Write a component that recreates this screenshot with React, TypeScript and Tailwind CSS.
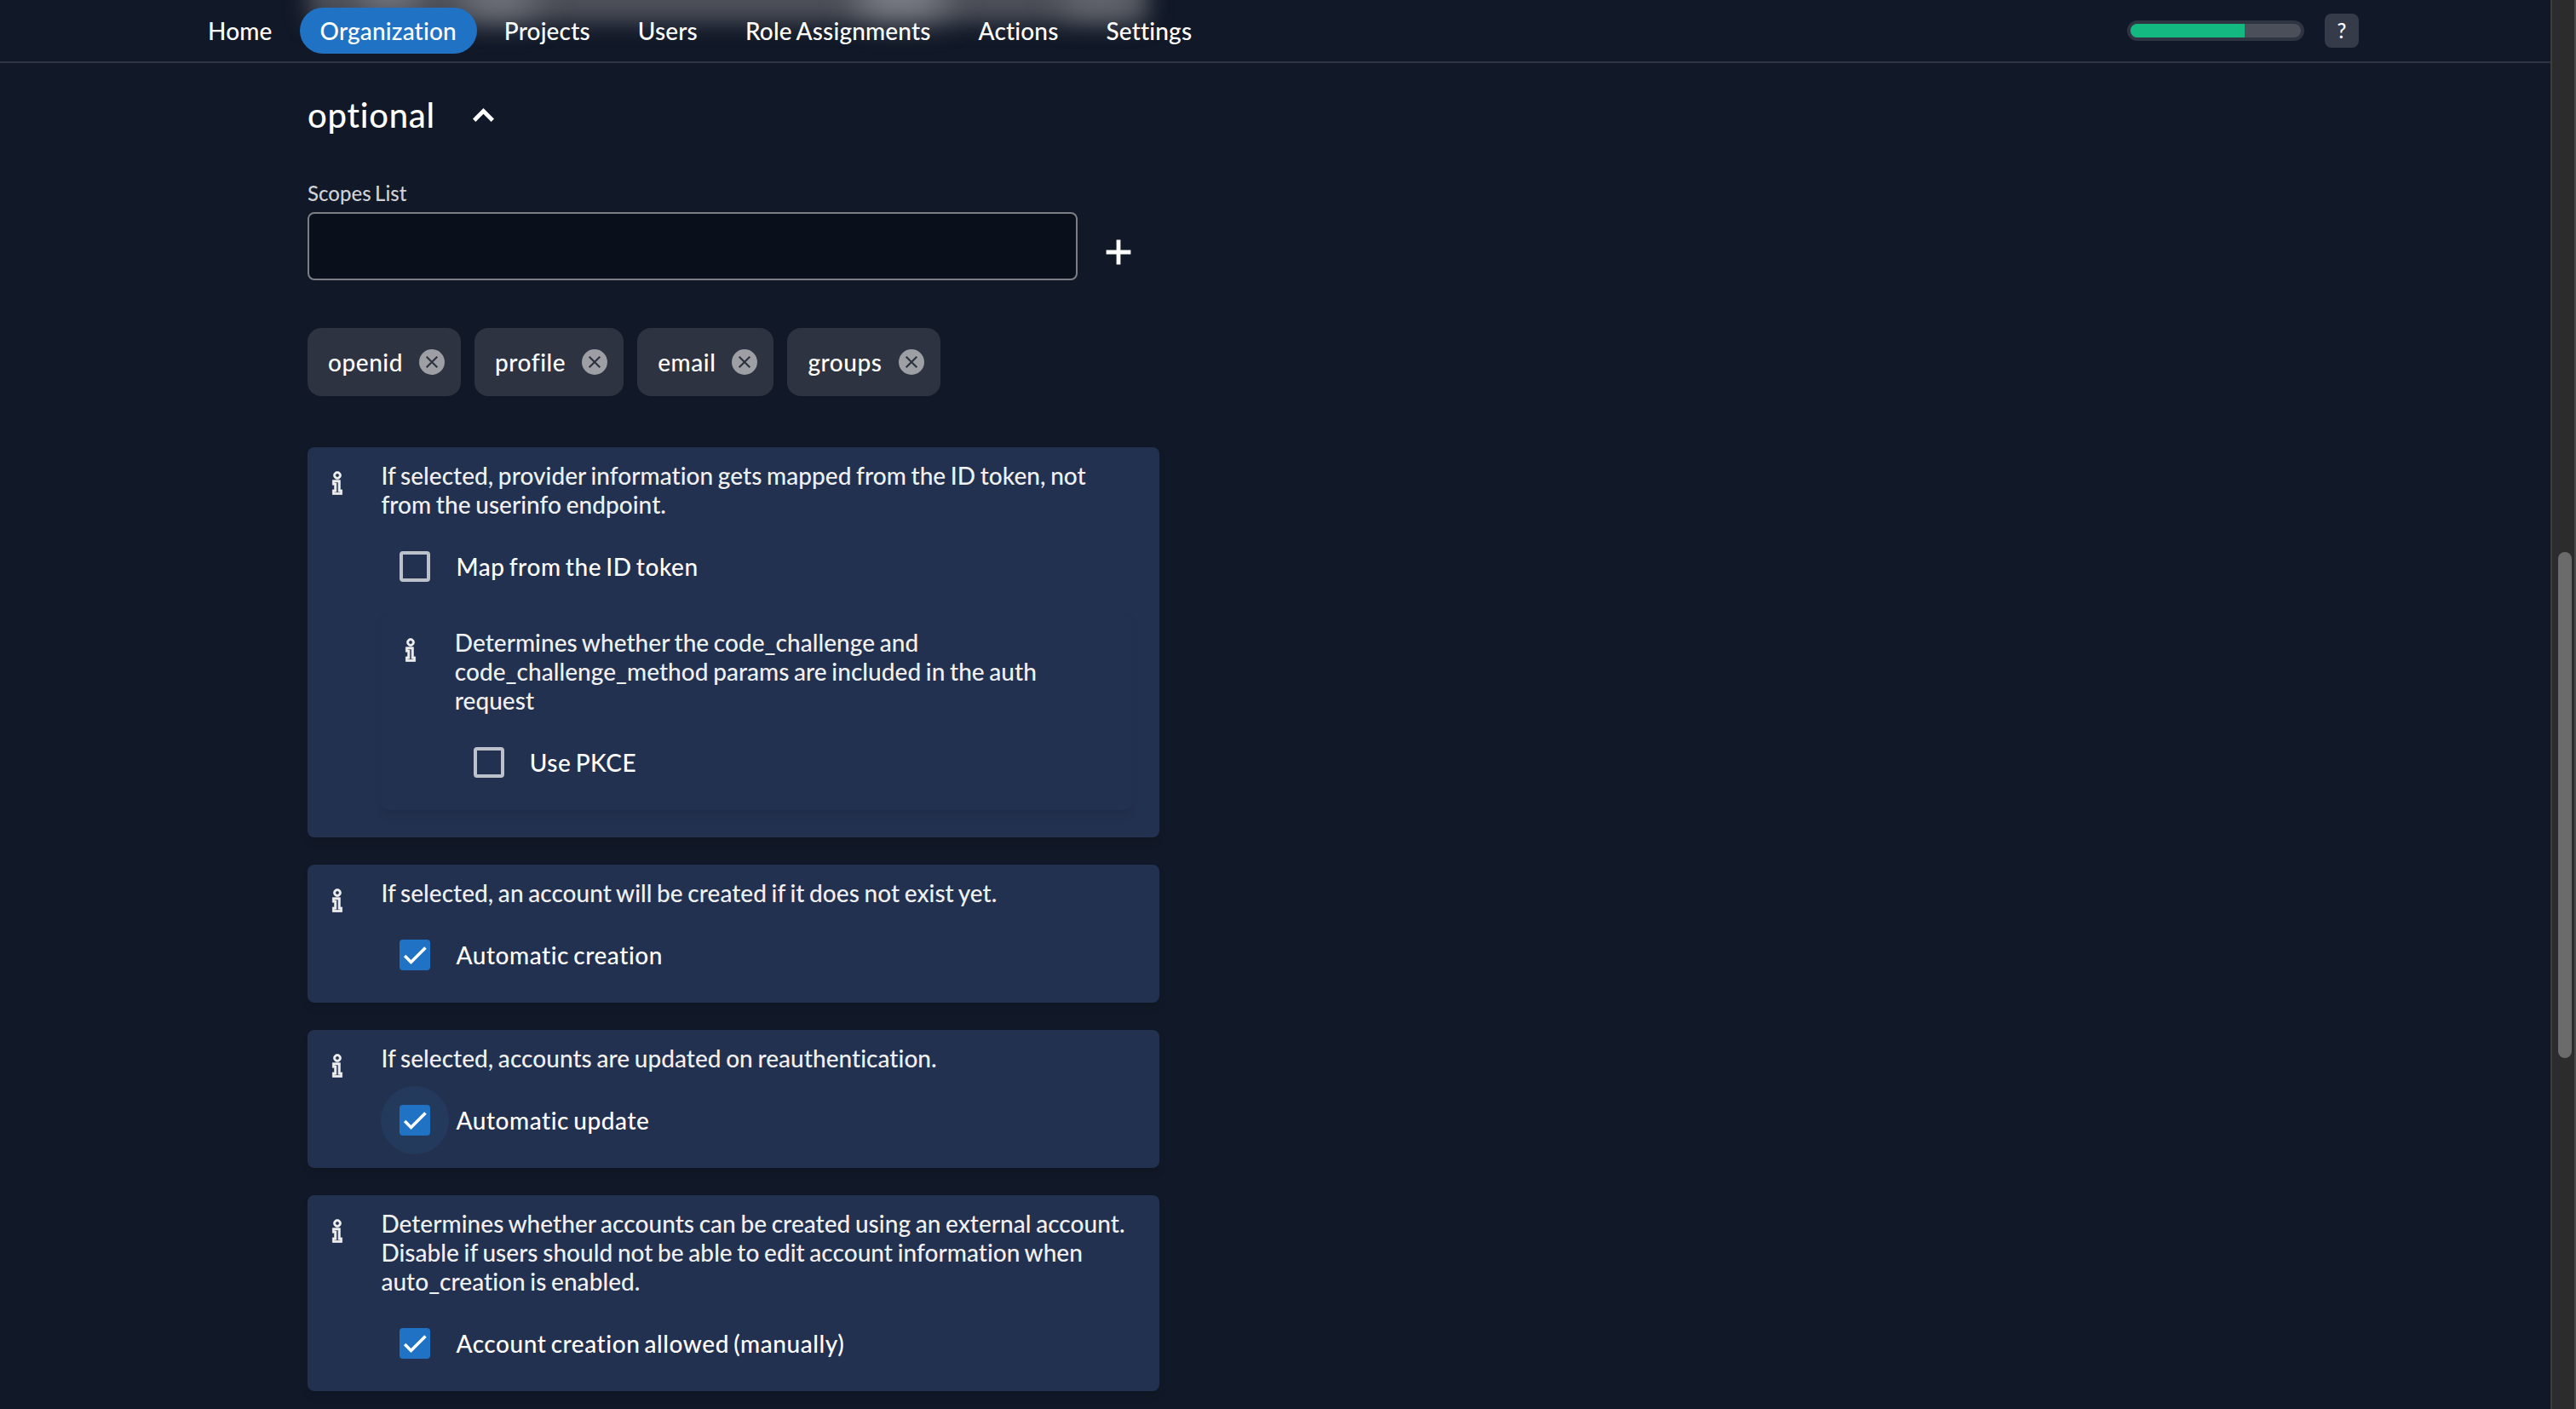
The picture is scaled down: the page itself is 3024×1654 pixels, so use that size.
import { useState } from 'react';
import { LiaInfoSolid } from 'react-icons/lia';

const NAV_ITEMS = ['Home', 'Organization', 'Projects', 'Users', 'Role Assignments', 'Actions', 'Settings'];

function Checkbox({ label, initial = false, focused = false }: { label: string; initial?: boolean; focused?: boolean }) {
  const [checked, setChecked] = useState(initial);
  return (
    <button onClick={() => setChecked(c => !c)} className="mt-4 flex h-20 items-center text-left">
      <span className={`flex h-20 w-20 items-center justify-center rounded-full ${focused ? 'bg-[#233a5c]' : ''}`}>
        {checked ? (
          <span className="flex h-9 w-9 items-center justify-center rounded-[4px] bg-[#2073c4]">
            <svg viewBox="0 0 24 24" className="h-9 w-9">
              <path d="M4.1 12.7 9 17.6 20.3 6.3" fill="none" stroke="#fff" strokeWidth="2.4" />
            </svg>
          </span>
        ) : (
          <span className="h-9 w-9 rounded-[4px] border-4 border-[#bdc1cb]" />
        )}
      </span>
      <span className="pl-2 text-[28px] font-medium tracking-[0.55px] text-white [word-spacing:-2.4px]">{label}</span>
    </button>
  );
}

function InfoSection({ text, children }: { text: string; children: React.ReactNode }) {
  return (
    <div className="flex rounded-lg bg-[#233150] py-4 pr-8 shadow-[0_6px_12px_-2px_rgba(0,0,0,0.12)]">
      <div className="flex w-[86.4px] shrink-0 pt-2 pl-[17px] text-[#f0f0f0]">
        <LiaInfoSolid className="h-9 w-9" stroke="currentColor" strokeWidth={0.6} />
      </div>
      <div className="flex-1">
        <p className="text-[28px] leading-[34px] font-medium tracking-[0.04px] text-[#f0f0f0]">{text}</p>
        {children}
      </div>
    </div>
  );
}

export default function App() {
  const [scopes, setScopes] = useState(['openid', 'profile', 'email', 'groups']);
  const [scope, setScope] = useState('');

  const addScope = () => {
    if (!scope) return;
    setScopes(s => [...s, scope]);
    setScope('');
  };

  return (
    <div className="flex h-[1654px] w-[3024px] overflow-hidden bg-[#111827] font-['Lato',sans-serif] text-white [font-variant-ligatures:none] [word-spacing:-1.5px]">
      <div className="flex w-[2994px] flex-col">
        <header className="relative flex h-[74px] shrink-0 items-center justify-between overflow-hidden border-b-2 border-[#2e3441] pr-[225px] pl-[220px]">
          {/* page content showing through the translucent bar */}
          <div className="absolute -top-10 left-[362px] h-[66px] w-[985px] bg-[#4d5059] blur-[13px]" />
          <div className="absolute -top-5 left-[425px] h-7 w-16 bg-[#85888f] blur-[18px]" />
          <div className="absolute -top-5 left-[545px] h-9 w-20 bg-[#7b7e85] blur-[20px]" />
          <div className="absolute -top-5 left-[1010px] h-9 w-24 bg-[#8c8f95] blur-[20px]" />
          <div className="absolute -top-5 left-[1250px] h-9 w-20 bg-[#686b72] blur-[18px]" />
          <nav className="relative flex gap-2">
            {NAV_ITEMS.map(item => (
              <a
                key={item}
                className={`flex h-[54px] items-center rounded-full px-6 text-[28px] font-medium tracking-[0.16px] ${item === 'Organization' ? 'bg-[#2073c4]' : ''}`}
              >
                {item}
              </a>
            ))}
          </nav>
          <div className="relative flex items-center gap-6">
            <div className="h-6 w-52 rounded-full border-4 border-[#2e3442] bg-[#4b4f5a]">
              <div className="h-4 w-[134px] rounded-l-full bg-[#14b981]" />
            </div>
            <button className="h-10 w-10 rounded-lg bg-[#353b49] text-2xl font-medium">?</button>
          </div>
        </header>

        <main className="ml-[361px] w-[1000px] pt-[37px]">
          <div className="flex items-center">
            <h2 className="w-[194px] text-[40px] leading-[48px] font-medium tracking-[0.75px]">optional</h2>
            <svg viewBox="0 0 25 16" className="h-4 w-[25px]">
              <path d="M1.7 14.3 12.5 3.4 23.3 14.3" fill="none" stroke="currentColor" strokeWidth="4.8" />
            </svg>
          </div>

          <div className="mt-[52px] text-2xl leading-8 font-medium text-[#d0d1d4]">Scopes List</div>
          <div className="mt-[6px] flex items-center">
            <input
              value={scope}
              onChange={e => setScope(e.target.value)}
              className="h-20 w-[904px] rounded-lg border-2 border-[#7d7f84] bg-[#0a101b] px-5 text-[28px] outline-none"
            />
            <button onClick={addScope} className="mt-[13px] ml-[33px]">
              <svg viewBox="0 0 30 30" className="h-[30px] w-[30px]">
                <path d="M15 .6V29.4M.6 15H29.4" fill="none" stroke="currentColor" strokeWidth="4.8" />
              </svg>
            </button>
          </div>

          <div className="mt-14 flex gap-4">
            {scopes.map(s => (
              <div key={s} className="flex h-20 items-center gap-[19px] rounded-2xl bg-[#2d3340] pr-[19px] pl-6 text-[28px] font-medium tracking-[0.55px]">
                <span>{s}</span>
                <svg
                  viewBox="0 0 30 30"
                  className="h-[30px] w-[30px]"
                  onClick={() => setScopes(list => list.filter(x => x !== s))}
                >
                  <circle cx="15" cy="15" r="15" fill="#9d9fa5" />
                  <path d="M8.7 8.7 21.3 21.3M21.3 8.7 8.7 21.3" stroke="#2d3340" strokeWidth="2.2" />
                </svg>
              </div>
            ))}
          </div>

          <div className="mt-[60px] flex flex-col gap-8">
            <InfoSection text="If selected, provider information gets mapped from the ID token, not from the userinfo endpoint.">
              <Checkbox label="Map from the ID token" />
              <div className="my-4">
                <InfoSection text="Determines whether the code_challenge and code_challenge_method params are included in the auth request">
                  <Checkbox label="Use PKCE" />
                </InfoSection>
              </div>
            </InfoSection>
            <InfoSection text="If selected, an account will be created if it does not exist yet.">
              <Checkbox label="Automatic creation" initial />
            </InfoSection>
            <InfoSection text="If selected, accounts are updated on reauthentication.">
              <Checkbox label="Automatic update" initial focused />
            </InfoSection>
            <InfoSection text="Determines whether accounts can be created using an external account. Disable if users should not be able to edit account information when auto_creation is enabled.">
              <Checkbox label="Account creation allowed (manually)" initial />
            </InfoSection>
          </div>
        </main>
      </div>

      <div className="flex w-[30px] justify-center border-r-2 border-l-2 border-r-[#4a4a4a] border-l-[#3d3d3d] bg-[#2c2c2c]">
        <div className="mt-[648px] ml-[3px] h-[594px] w-4 rounded-full bg-[#6b6b6b]" />
      </div>
    </div>
  );
}
